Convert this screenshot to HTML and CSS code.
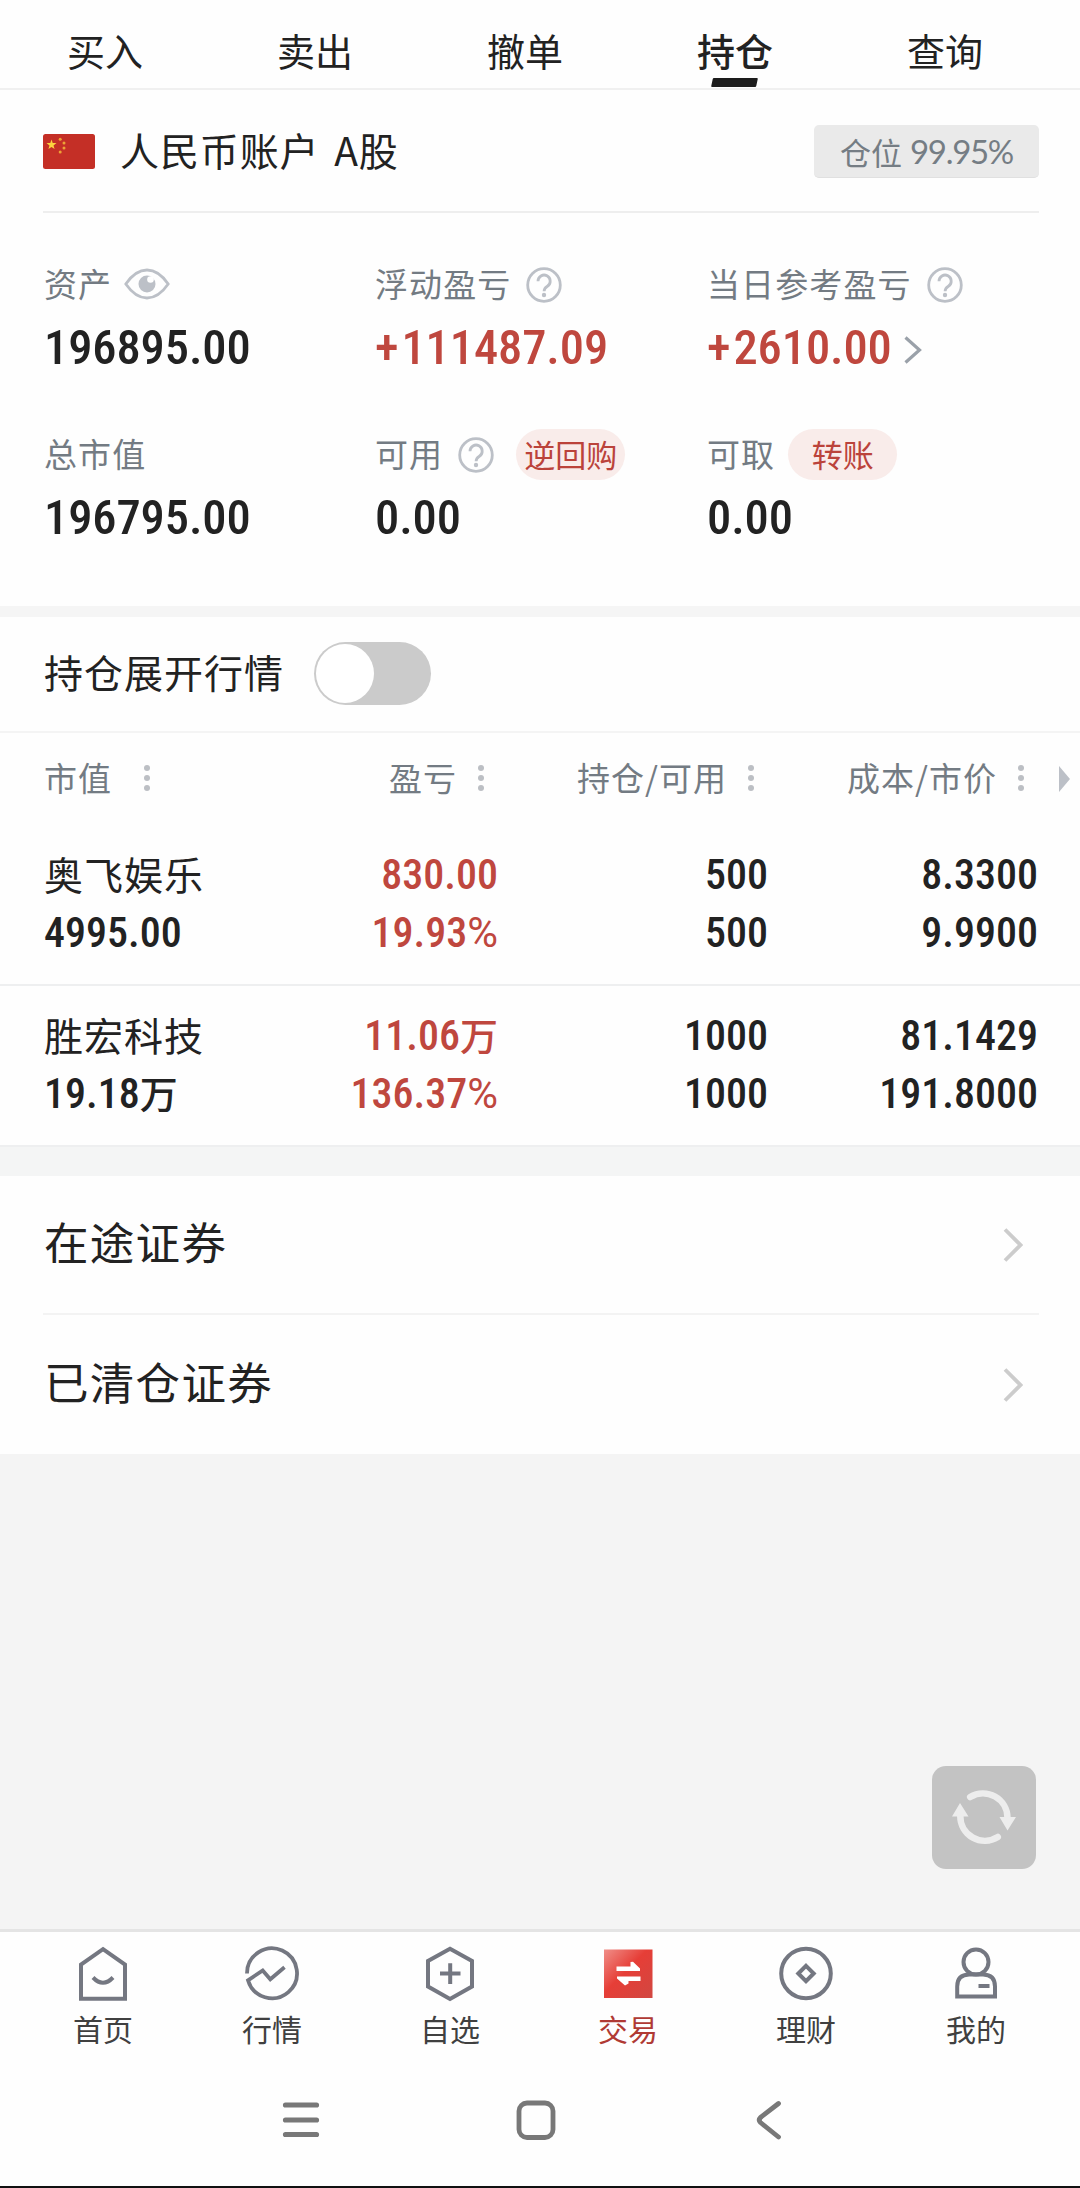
FILE: index.html
```
<!DOCTYPE html>
<html lang="zh-CN">
<head>
    <meta charset="UTF-8">
    <meta name="viewport" content="width=device-width, initial-scale=1.0">
    <title>持仓</title>
    <link rel="stylesheet" href="styles.css">
</head>
<body>
    <!-- shared icons -->
    <svg class="sprite" width="0" height="0">
        <symbol id="help" viewBox="0 0 36 36">
            <circle cx="18" cy="18" r="16.3" fill="none" stroke="#bcc0c7" stroke-width="2.8"/>
            <path d="M12 14.2a6.1 6.1 0 1 1 9.4 5.1c-2 1.3-3.3 2.3-3.3 4.9" fill="none" stroke="#bcc0c7" stroke-width="2.8"/>
            <circle cx="18" cy="28" r="2.2" fill="#bcc0c7"/>
        </symbol>
        <symbol id="dots" viewBox="0 0 6 28">
            <circle cx="3" cy="4" r="3" fill="#bcbfc4"/>
            <circle cx="3" cy="14" r="3" fill="#bcbfc4"/>
            <circle cx="3" cy="24" r="3" fill="#bcbfc4"/>
        </symbol>
        <symbol id="arrow" viewBox="0 0 20 34">
            <path d="M2 1.5L17.5 17L2 32.5" fill="none" stroke="#cccccc" stroke-width="3.8"/>
        </symbol>
    </svg>

    <div class="app">
        <nav class="tabs">
            <a class="tab">买入</a>
            <a class="tab">卖出</a>
            <a class="tab">撤单</a>
            <a class="tab active">持仓</a>
            <a class="tab">查询</a>
        </nav>

        <section class="account">
            <svg class="flag" width="52" height="35" viewBox="0 0 52 35">
                <rect width="52" height="35" rx="2.5" fill="#c42f26"/>
                <path fill="#fbd33f" d="M8.5 5.5l1.2 3.6h3.8l-3 2.3 1.1 3.7-3.1-2.2-3.1 2.2 1.1-3.7-3-2.3h3.8z"/>
                <g fill="#eda336">
                    <circle cx="17.2" cy="5.2" r="1.5"/>
                    <circle cx="21" cy="9" r="1.5"/>
                    <circle cx="21" cy="14" r="1.5"/>
                    <circle cx="17.2" cy="18" r="1.5"/>
                </g>
            </svg>
            <h1>人民币账户 A股</h1>
            <span class="position">仓位 <b>99.95%</b></span>
        </section>

        <section class="summary">
            <div class="item">
                <div class="label">资产
                    <svg class="eye" width="46" height="32" viewBox="0 0 46 32">
                        <path d="M1.8 16C8 7 15 2 23 2s15 5 21.2 14C38 25 31 30 23 30S8 25 1.8 16z" fill="none" stroke="#bcc0c7" stroke-width="2.8"/>
                        <circle cx="23" cy="16" r="8.5" fill="#bcc0c7"/>
                        <circle cx="26.5" cy="11.5" r="3.3" fill="#fff"/>
                    </svg>
                </div>
                <div class="value">196895.00</div>
            </div>
            <div class="item">
                <div class="label">浮动盈亏<svg class="help"><use href="#help"/></svg></div>
                <div class="value red"><span class="sign">+</span>111487.09</div>
            </div>
            <div class="item">
                <div class="label">当日参考盈亏<svg class="help"><use href="#help"/></svg></div>
                <div class="value red"><span class="sign">+</span>2610.00
                    <svg class="more" width="18" height="28" viewBox="0 0 18 28">
                        <path d="M1.5 1.5L15.5 14L1.5 26.5" fill="none" stroke="#9aa1a9" stroke-width="3.2"/>
                    </svg>
                </div>
            </div>
            <div class="item">
                <div class="label">总市值</div>
                <div class="value">196795.00</div>
            </div>
            <div class="item">
                <div class="label">可用<svg class="help"><use href="#help"/></svg><span class="pill repo">逆回购</span></div>
                <div class="value">0.00</div>
            </div>
            <div class="item">
                <div class="label">可取<span class="pill">转账</span></div>
                <div class="value">0.00</div>
            </div>
        </section>

        <section class="expand">
            <span class="title">持仓展开行情</span>
            <span class="switch"></span>
        </section>

        <section class="holdings">
            <div class="row head">
                <div class="cell first">市值<svg class="dots"><use href="#dots"/></svg></div>
                <div class="cell">盈亏<svg class="dots"><use href="#dots"/></svg></div>
                <div class="cell">持仓/可用<svg class="dots"><use href="#dots"/></svg></div>
                <div class="cell">成本/市价<svg class="dots"><use href="#dots"/></svg></div>
                <svg class="scroll" width="11" height="26" viewBox="0 0 11 26"><path d="M0 0L11 13L0 26z" fill="#bcc0c7"/></svg>
            </div>
            <div class="row">
                <div class="cell first"><span class="name">奥飞娱乐</span><span>4995.00</span></div>
                <div class="cell red"><span>830.00</span><span>19.93<i>%</i></span></div>
                <div class="cell"><span>500</span><span>500</span></div>
                <div class="cell"><span>8.3300</span><span>9.9900</span></div>
            </div>
            <div class="row">
                <div class="cell first"><span class="name">胜宏科技</span><span>19.18<em>万</em></span></div>
                <div class="cell red"><span>11.06<em>万</em></span><span>136.37<i>%</i></span></div>
                <div class="cell"><span>1000</span><span>1000</span></div>
                <div class="cell"><span>81.1429</span><span>191.8000</span></div>
            </div>
        </section>

        <section class="links">
            <a class="link"><span>在途证券</span><svg class="arrow"><use href="#arrow"/></svg></a>
            <a class="link"><span>已清仓证券</span><svg class="arrow"><use href="#arrow"/></svg></a>
        </section>

        <main class="blank">
            <button class="refresh">
                <svg width="64" height="58" viewBox="0 0 64 58">
                    <g fill="none" stroke="#ededed" stroke-width="6.5" stroke-linecap="round">
                        <path d="M18.2 8A24.5 24.5 0 0 1 55.5 29"/>
                        <path d="M45.8 48A24.5 24.5 0 0 1 8.3 27"/>
                    </g>
                    <path d="M47.5 28H64L55.5 41.5zM0 27.5H16.5L8 14z" fill="#ededed"/>
                </svg>
            </button>
        </main>

        <nav class="tabbar">
            <a>
                <svg width="54" height="56" viewBox="0 0 54 56" fill="none" stroke="#747781" stroke-width="4">
                    <path d="M27 3.2L49 18.5V52.7H5V18.5z"/>
                    <path d="M17 31.5q10 10.5 20 0"/>
                </svg>
                <span>首页</span>
            </a>
            <a>
                <svg width="54" height="56" viewBox="0 0 54 56" fill="none" stroke="#747781" stroke-width="3.8">
                    <path d="M2 27.5A25 25 0 1 1 3 34.3L17.7 24.5L25.3 33.3L39.5 21.3"/>
                </svg>
                <span>行情</span>
            </a>
            <a>
                <svg width="54" height="56" viewBox="0 0 54 56" fill="none" stroke="#747781" stroke-width="4">
                    <path d="M27 2.7L49 15V40.5L27 53L5 40.5V15z"/>
                    <path d="M17 27.6H37.5M27.2 17.3V38"/>
                </svg>
                <span>自选</span>
            </a>
            <a class="active">
                <svg width="54" height="56" viewBox="0 0 54 56">
                    <defs>
                        <linearGradient id="trade" x1="0" y1="0" x2="1" y2="1">
                            <stop offset="0" stop-color="#f08e88"/>
                            <stop offset=".45" stop-color="#e63e37"/>
                            <stop offset="1" stop-color="#d14741"/>
                        </linearGradient>
                    </defs>
                    <rect x="3" y="3.5" width="48.5" height="48.5" fill="url(#trade)"/>
                    <path d="M15.5 20.5H29.5V16L32 15.8L39 22.5V25H15.5zM39.5 35H27.5V37.5L24 39.5L16 32.5V30.5H39.5z" fill="#fff"/>
                </svg>
                <span>交易</span>
            </a>
            <a>
                <svg width="54" height="56" viewBox="0 0 54 56" fill="none" stroke="#747781" stroke-width="4">
                    <circle cx="27" cy="27.5" r="24.8"/>
                    <path d="M27 19.8L34.7 27.5L27 35.2L19.3 27.5z"/>
                </svg>
                <span>理财</span>
            </a>
            <a>
                <svg width="54" height="56" viewBox="0 0 54 56" fill="none" stroke="#747781" stroke-width="4">
                    <circle cx="27" cy="16" r="12.5"/>
                    <path d="M8.2 50.5V40.5Q8.2 28.5 20.2 28.5H34Q46 28.5 46 40.5V50.5z"/>
                    <path d="M29.5 40H40.5"/>
                </svg>
                <span>我的</span>
            </a>
        </nav>

        <footer class="system">
            <svg width="38" height="40" viewBox="0 0 38 40" stroke="#787878" stroke-width="5.2" stroke-linecap="round">
                <path d="M3.5 5H34.5M3.5 20H34.5M3.5 34.5H34.5"/>
            </svg>
            <svg width="40" height="40" viewBox="0 0 40 40" fill="none" stroke="#787878" stroke-width="4.8">
                <rect x="3" y="3" width="34" height="34.5" rx="8"/>
            </svg>
            <svg class="back" width="26" height="40" viewBox="0 0 26 40" fill="none" stroke="#787878" stroke-width="4.8" stroke-linecap="round" stroke-linejoin="round">
                <path d="M22.5 3.5L4.5 17.5Q2 20 4.5 22.5L22.5 37"/>
            </svg>
        </footer>
    </div>
</body>
</html>
```
FILE: styles.css
```
* {
    box-sizing: border-box;
}

body {
    margin: 0;
    background-color: #fff;
    color: #222;
    font-family: "Noto Sans CJK SC", sans-serif;
}

.sprite {
    position: absolute;
}

.app {
    display: flex;
    flex-direction: column;
    width: 1080px;
    height: 2188px;
    background-color: #fefefe;
}

/* top tabs */
.tabs {
    display: flex;
    height: 90px;
    border-bottom: 2px solid #f0f0f0;
}

.tab {
    position: relative;
    width: 210px;
    line-height: 99px;
    text-align: center;
    font-size: 38px;
}

.tab.active {
    font-weight: 500;
}

.tab.active::after {
    content: "";
    position: absolute;
    left: 82px;
    top: 78px;
    width: 45px;
    height: 9px;
    border-radius: 1px;
    background-color: #1c1c1c;
    transform: skewX(-12deg);
}

/* account line */
.account {
    display: flex;
    align-items: center;
    height: 123px;
    margin: 0 41px 0 43px;
    padding-top: 2px;
    border-bottom: 2px solid #eee;
}

.account h1 {
    flex: 1;
    margin: 0 0 0 25px;
    padding-bottom: 6px;
    font-size: 39px;
    font-weight: 400;
    letter-spacing: 0.9px;
    line-height: 60px;
    word-spacing: 5px;
}

.position {
    display: flex;
    align-items: center;
    justify-content: center;
    gap: 8px;
    width: 225px;
    height: 53px;
    border-radius: 5px;
    border-bottom: 1px solid #e0e0e0;
    background-color: #eaeaea;
    color: #757d84;
    font-size: 31px;
    line-height: 51px;
}

.position b {
    font-family: Lato, sans-serif;
    font-size: 33px;
    font-weight: 400;
    letter-spacing: -1.3px;
}

/* summary */
.summary {
    display: grid;
    grid-template-columns: 331px 332px 1fr;
    grid-template-rows: 170px 170px;
    height: 393px;
    padding: 44px 0 0 44px;
}

.label {
    display: flex;
    align-items: center;
    height: 52px;
    color: #737b83;
    font-size: 33px;
    letter-spacing: 1.1px;
    line-height: 52px;
}

.value {
    display: flex;
    align-items: center;
    height: 78px;
    font-family: "Roboto Condensed", Roboto, sans-serif;
    font-size: 48.5px;
    font-weight: 500;
    letter-spacing: -0.1px;
    line-height: 78px;
}

.sign {
    margin-right: 3px;
}

.red {
    color: #bf473e;
}

.eye {
    margin: 1px 0 0 12px;
}

.help {
    width: 36px;
    height: 36px;
    margin: 3px 0 0 15px;
}

.more {
    margin: 3px 0 0 12px;
}

.pill {
    width: 109px;
    height: 51px;
    margin: 2px 0 0 13px;
    border-radius: 26px;
    background-color: #f9ecea;
    color: #bb433b;
    font-size: 31px;
    line-height: 49px;
    letter-spacing: 0;
    text-align: center;
}

.pill.repo {
    margin-left: 22px;
}

/* quote switch */
.expand {
    display: flex;
    align-items: center;
    gap: 30px;
    height: 127px;
    padding: 0 0 2px 44px;
    border-top: 11px solid #f5f5f5;
    border-bottom: 2px solid #f4f4f4;
    font-size: 39px;
    letter-spacing: 1px;
    line-height: 60px;
}

.expand .title {
    padding-bottom: 5px;
}

.switch {
    width: 117px;
    height: 63px;
    padding: 2px;
    border-radius: 32px;
    background-color: #cbcbcb;
}

.switch::before {
    content: "";
    display: block;
    width: 58px;
    height: 59px;
    border-radius: 50%;
    background-color: #fff;
}

/* holdings */
.row {
    display: grid;
    grid-template-columns: 200px 254px 270px 270px 1fr;
    height: 161px;
    padding: 21px 0 0 44px;
    border-bottom: 2px solid #eeeff0;
}

.row.head {
    align-items: center;
    height: 92px;
    padding-top: 0;
    border-bottom: 0;
    color: #737b83;
}

.cell {
    display: flex;
    flex-direction: column;
    align-items: flex-end;
    font-family: "Roboto Condensed", Roboto, "Noto Sans CJK SC", sans-serif;
    font-size: 42px;
    font-weight: 500;
    line-height: 57.5px;
}

.cell.first {
    align-items: flex-start;
}

.cell span {
    height: 57.5px;
}

.cell .name {
    font-family: "Noto Sans CJK SC", sans-serif;
    font-size: 39px;
    font-weight: 400;
    letter-spacing: 1px;
    line-height: 55px;
}

.cell em {
    font-size: 38px;
    font-style: normal;
}

.cell i {
    font-family: Roboto, sans-serif;
    font-style: normal;
    font-weight: 400;
}

.head .cell {
    flex-direction: row;
    align-items: center;
    justify-content: flex-end;
    padding: 0 14px 2px 0;
    font-family: "Noto Sans CJK SC", sans-serif;
    font-size: 33px;
    font-weight: 400;
    letter-spacing: 1px;
}

.head .first {
    justify-content: flex-start;
}

.dots {
    width: 6px;
    height: 28px;
    margin-left: 21px;
}

.first .dots {
    margin-left: 32px;
}

.scroll {
    margin-left: 21px;
}

/* links */
.links {
    border-top: 29px solid #f4f5f5;
}

.link {
    display: flex;
    align-items: center;
    justify-content: space-between;
    height: 137px;
    margin: 0 41px 0 43px;
    padding-right: 16px;
    font-size: 44.5px;
    letter-spacing: 1.3px;
}

.link span {
    padding: 0 0 9px 1px;
}

.link + .link {
    height: 141px;
    border-top: 2px solid #f3f3f3;
}

.arrow {
    width: 20px;
    height: 34px;
}

.blank {
    display: flex;
    flex: 1;
    align-items: flex-end;
    justify-content: flex-end;
    padding: 0 44px 60px 0;
    background-color: #f4f4f4;
}

.refresh {
    display: flex;
    align-items: center;
    justify-content: center;
    width: 104px;
    height: 103px;
    padding: 0;
    border: none;
    border-radius: 14px;
    background-color: #c3c3c3;
}

/* bottom tab bar */
.tabbar {
    display: grid;
    grid-template-columns: 160px 178px 178px 178px 178px 162px;
    height: 143px;
    padding: 14px 0 0 23px;
    border-top: 3px solid #e4e4e4;
}

.tabbar a {
    display: flex;
    flex-direction: column;
    align-items: center;
    color: #404040;
    font-size: 30px;
    line-height: 52px;
}

.tabbar .active {
    color: #b03a34;
}

.system {
    display: flex;
    align-items: center;
    gap: 196px;
    height: 116px;
    padding: 0 0 18px 282px;
    border-bottom: 2px solid #111;
}

.back {
    margin-left: 4px;
}
```
